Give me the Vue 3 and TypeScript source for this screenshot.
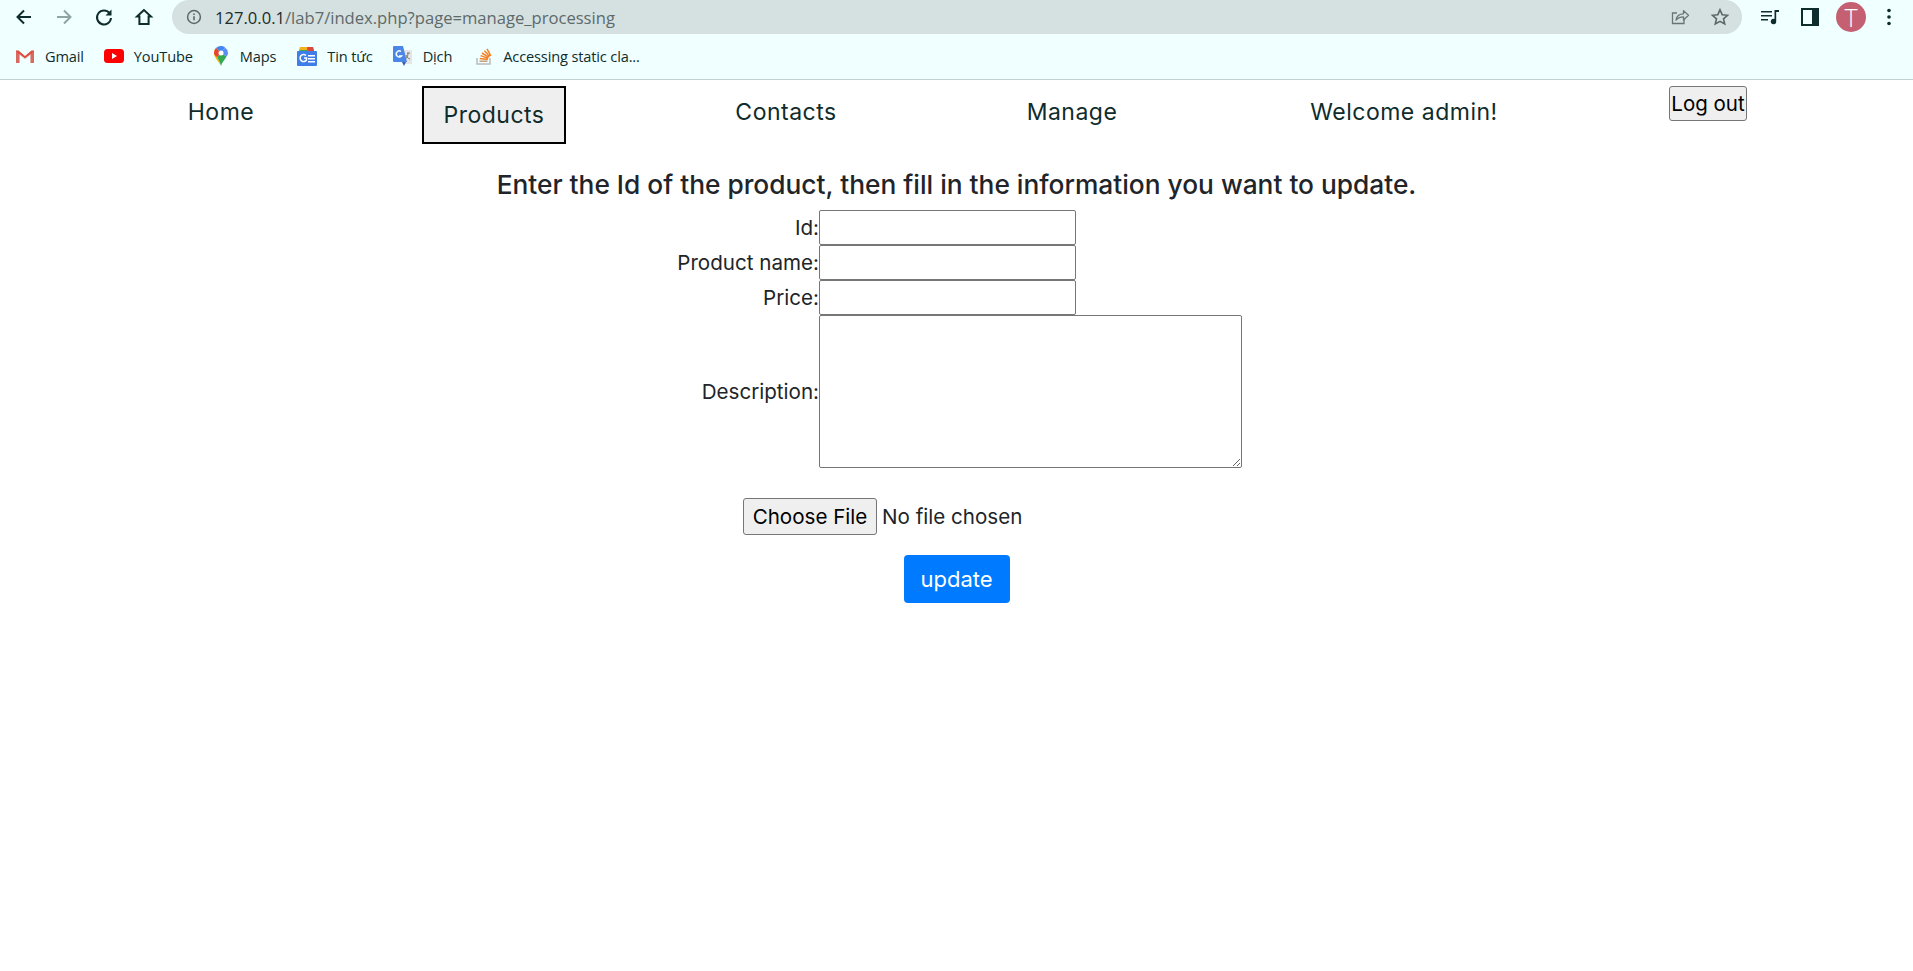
<template>
  <div class="page">
    <header class="browser">
      <div class="toolbar">
        <button class="tool" aria-label="Back">
          <svg width="20" height="20" viewBox="0 0 20 20"><path d="M17 10H4M10 3.5 3.5 10l6.5 6.500" fill="none" stroke="#0f2c2c" stroke-width="2" /></svg>
        </button>
        <button class="tool" aria-label="Forward">
          <svg width="20" height="20" viewBox="0 0 20 20"><path d="M3 10h13M10 3.5l6.5 6.5-6.5 6.500" fill="none" stroke="#8fa5a5" stroke-width="2" /></svg>
        </button>
        <button class="tool" aria-label="Reload">
          <svg width="20" height="20" viewBox="0 0 20 20"><path d="M15.600 6.200A7 7 0 1 0 17 11" fill="none" stroke="#0f2c2c" stroke-width="2" /><path d="M17.500 2.500v6h-6z" fill="#0f2c2c" /></svg>
        </button>
        <button class="tool" aria-label="Home">
          <svg width="20" height="20" viewBox="0 0 20 20"><path d="M10 3 3 9.600h2.400V17h9.200V9.600H17z" fill="none" stroke="#0f2c2c" stroke-width="2" /></svg>
        </button>
        <div class="omnibox">
          <svg class="info" width="16" height="16" viewBox="0 0 16 16"><circle cx="8" cy="8" r="6.400" fill="none" stroke="#5d6767" stroke-width="1.500" /><path d="M8 7.200v4M8 4.600v1.500" stroke="#5d6767" stroke-width="1.600" /></svg>
          <span class="url"><span class="host">127.0.0.1</span>/lab7/index.php?page=manage_processing</span>
          <svg class="share" width="20" height="20" viewBox="0 0 20 20"><path d="M14 12v4.500H2.500V6H7" fill="none" stroke="#6b7474" stroke-width="1.300" /><path d="M6 13c.6-4 3.500-6.200 7.500-6.200V3.600l5 4.700-5 4.600V9.800C10.500 9.800 8 10.800 6 13z" fill="none" stroke="#6b7474" stroke-width="1.300" stroke-linejoin="round" /></svg>
          <svg class="star" width="20" height="20" viewBox="0 0 20 20"><path d="m10 2.800 2.200 4.900 5.300.6-4 3.500 1.200 5.200-4.700-2.700-4.700 2.700 1.200-5.200-4-3.500 5.300-.6z" fill="none" stroke="#5d6767" stroke-width="1.600" /></svg>
        </div>
        <div class="actions">
          <svg width="20" height="20" viewBox="0 0 20 20"><path d="M1 4h11v1.600H1zM1 8h11v1.600H1zM1 12h7v1.600H1z" fill="#0f2c2c" /><path d="M14.500 3H19v2h-2.800v9.500a2.700 2.700 0 1 1-1.700-2.500z" fill="#0f2c2c" /></svg>
          <svg width="20" height="20" viewBox="0 0 20 20"><path d="M2 2h16v16H2z" fill="none" stroke="#0f2c2c" stroke-width="2" /><path d="M12 2h6v16h-6z" fill="#0f2c2c" /></svg>
          <span class="avatar">T</span>
          <svg class="dots" width="6" height="20" viewBox="0 0 6 20"><circle cx="3" cy="3.500" r="1.800" /><circle cx="3" cy="10" r="1.800" /><circle cx="3" cy="16.500" r="1.800" /></svg>
        </div>
      </div>
      <div class="bookmarks">
        <a class="bookmark">
          <svg width="20" height="16" viewBox="0 0 20 16"><path d="M1 15V2.500h2.500L10 8l6.500-5.500H19V15h-3.500V7L10 11.500 4.500 7v8z" fill="#e6e2de" /><path d="M1 15V3l3.500 2.500V15z" fill="#d9695f" /><path d="M19 15V3l-3.500 2.500V15z" fill="#d9695f" /><path d="M1 2.500h2.500L10 8l6.500-5.500H19v1L10 10.500 1 3.500z" fill="#dc4e41" /></svg>
          Gmail
        </a>
        <a class="bookmark">
          <svg width="20" height="14" viewBox="0 0 20 14"><rect width="20" height="14" rx="3.500" fill="#f00" /><path d="m8 4 5 3-5 3z" fill="#fff" /></svg>
          YouTube
        </a>
        <a class="bookmark">
          <svg width="14" height="20" viewBox="0 0 14 20"><path d="M7 20C5 15.500 0 12 0 7a7 7 0 0 1 2-5l5 5-4 4c1.500 2.500 3 5 4 9z" fill="#f4b400" /><path d="M7 20c1-4 4-6.500 5.500-9.500L7 7 3 11c1.500 2.500 3 5 4 9z" fill="#34a853" /><path d="M2 2a7 7 0 0 1 5-2c1.500 0 3 .5 4 1.500L7 7z" fill="#4285f4" /><path d="M11 1.500A7 7 0 0 1 14 7c0 1.300-.7 2.500-1.500 3.500L7 7z" fill="#5a8df5" /><path d="M0 7a7 7 0 0 1 2-5l5 5-4 4C1 9.500 0 8.500 0 7z" fill="#ea4335" /><circle cx="7" cy="7" r="2.500" fill="#fff" /></svg>
          Maps
        </a>
        <a class="bookmark">
          <svg width="20" height="20" viewBox="0 0 20 20"><path d="M3 1h13l1 5H2z" fill="#3aa757" /><path d="M3 1h7v3H3z" fill="#f2b01e" /><path d="M11 1h5l1 4h-6z" fill="#d9483b" /><rect y="5" width="20" height="15" rx="1" fill="#3f7ee8" /><path d="M11 9h7v1.600h-7zM11 12h7v1.600h-7zM11 15h7v1.600h-7z" fill="#fff" /><path d="M9 9.500A3.500 3.500 0 1 0 9.500 14v-2H7" fill="none" stroke="#fff" stroke-width="1.500" /></svg>
          Tin tức
        </a>
        <a class="bookmark">
          <svg width="20" height="20" viewBox="0 0 20 20"><path d="M9 4h10v14H11z" fill="#e5e5e5" /><path d="M14 7h3M15 7c0 3-1 5-2.500 6M13 9c.5 2 2 3.500 4 4" fill="none" stroke="#777" stroke-width="1" /><path d="M1 0h9l4 16H1a1 1 0 0 1-1-1V1a1 1 0 0 1 1-1z" fill="#4a86e8" /><path d="m9 16 2 4 2-4z" fill="#3b5bb0" /><path d="M8 5.500A3 3 0 1 0 8.500 10H6" fill="none" stroke="#fff" stroke-width="1.400" /></svg>
          Dịch
        </a>
        <a class="bookmark">
          <svg width="17" height="18" viewBox="0 0 17 18"><path d="M1 11v6h13v-6" fill="none" stroke="#bcbbbb" stroke-width="1.500" /><path d="M3.500 14.200h8" stroke="#c8a07a" stroke-width="1.500" /><path d="m3.800 11.400 8 1.200M4.600 8.600l7.600 2.800M6 6l6.800 4.400M8.400 3.800l5.400 5.800M11 1.800l3.800 7" fill="none" stroke="#f48024" stroke-width="1.500" /></svg>
          Accessing static cla...
        </a>
      </div>
    </header>

    <nav class="site-nav">
      <a class="nav-cell">Home</a>
      <a class="nav-cell"><span class="nav-active">Products</span></a>
      <a class="nav-cell">Contacts</a>
      <a class="nav-cell">Manage</a>
      <a class="nav-cell">Welcome admin!</a>
      <div class="nav-cell logout-cell"><button class="logout">Log out</button></div>
    </nav>

    <main class="content">
      <h1>Enter the Id of the product, then fill in the information you want to update.</h1>
      <form class="form" @submit.prevent>
        <div class="fields">
          <label for="pid">Id:</label>
          <input id="pid" type="text" />
          <label for="pname">Product name:</label>
          <input id="pname" type="text" />
          <label for="price">Price:</label>
          <input id="price" type="text" />
          <label for="desc">Description:</label>
          <textarea id="desc"></textarea>
        </div>
        <div class="file-row">
          <button type="button" class="file-btn">Choose File</button>
          <span class="file-name">No file chosen</span>
        </div>
        <button type="submit" class="update">update</button>
      </form>
    </main>
  </div>
</template>

<script setup lang="ts">
</script>

<style>
html, body { background: #fff; }
</style>

<style scoped>
.page { min-height: 971px; font-family: Inter, "Noto Sans", sans-serif; color: #212529; }
.browser { height: 80px; background: #f0ffff; border-bottom: 1px solid #c3d0d0; box-sizing: border-box; font-family: "Open Sans", "Noto Sans", sans-serif; color: #0f2c2c; }
.toolbar { display: flex; height: 34px; align-items: center; padding-left: 14px; }
.tool { width: 20px; height: 20px; margin-right: 20px; padding: 0; border: 0; background: none; display: flex; }
.tool:nth-child(4) { margin-right: 18px; }
.omnibox { width: 1570px; height: 34px; border-radius: 17px; background: #d5e0e0; display: flex; align-items: center; padding-left: 14px; box-sizing: border-box; }
.url { margin-left: 13px; font-size: 16.600px; color: #5d6a6a; }
.host { color: #1b2c2c; }
.share { margin-left: auto; }
.star { margin: 0 12px 0 20px; }
.actions { display: flex; align-items: center; margin-left: 18px; }
.actions svg:nth-child(2) { margin-left: 20px; }
.avatar { width: 30px; height: 30px; margin-left: 16px; border-radius: 50%; background: #c46072; color: #fff; font-size: 25px; font-weight: 300; line-height: 30px; text-align: center; }
.dots { margin-left: 20px; fill: #0f2c2c; }
.bookmarks { display: flex; height: 44px; align-items: center; padding-left: 15px; }
.bookmark { display: flex; align-items: center; gap: 10px; margin-right: 20px; font-size: 14.600px; letter-spacing: -0.15px; }
.bookmark:nth-child(2) { margin-right: 21px; }
.bookmark:nth-child(3) { gap: 12px; margin-right: 21px; }
.bookmark:nth-child(5) { margin-right: 24px; }

.site-nav { display: grid; grid-template-columns: 272px 274px 310px 262px 402px 206px; height: 64px; margin-left: 85px; color: #0f2c2c; font-size: 23px; letter-spacing: 0.5px; }
.nav-cell { display: flex; justify-content: center; align-items: center; height: 64px; }
.nav-active { display: block; width: 144px; height: 58px; box-sizing: border-box; line-height: 54px; text-align: center; background: #efefef; border: 2px solid #000; margin-top: 6px; }
.logout-cell { align-items: flex-start; padding-top: 6px; }
.logout { width: 78px; height: 35px; padding: 0; font: inherit; font-size: 20.500px; letter-spacing: 0; color: #000; background: #efefef; border: 1px solid #767676; border-radius: 3px; }

.content { text-align: center; }
h1 { margin: 22px 0 0; height: 38px; font-size: 26.300px; font-weight: 500; line-height: 38px; color: #212529; }
.form { display: flex; flex-direction: column; align-items: center; }
.fields { display: grid; grid-template-columns: 148px 423px; align-items: center; justify-items: start; font-size: 20.600px; text-align: right; margin-top: 6px; }
.fields label { justify-self: end; white-space: nowrap; }
.fields input { width: 257px; height: 35px; margin: 0; box-sizing: border-box; background: #fff; border: 1px solid #767676; border-radius: 2px; }
.fields textarea { width: 423px; height: 153px; margin: 0; box-sizing: border-box; background: #fff; border: 1px solid #767676; border-radius: 2px; display: block; }
.file-row { display: flex; width: 427px; align-items: center; margin-top: 30px; font-size: 20.600px; }
.file-btn { width: 134px; height: 37px; padding: 0; font: inherit; color: #000; background: #efefef; border: 1px solid #767676; border-radius: 3px; }
.file-name { margin-left: 5px; }
.update { width: 106px; height: 48px; margin-top: 20px; padding: 0; font: inherit; font-size: 22px; color: #fff; background: #007bff; border: 0; border-radius: 4px; }
</style>
